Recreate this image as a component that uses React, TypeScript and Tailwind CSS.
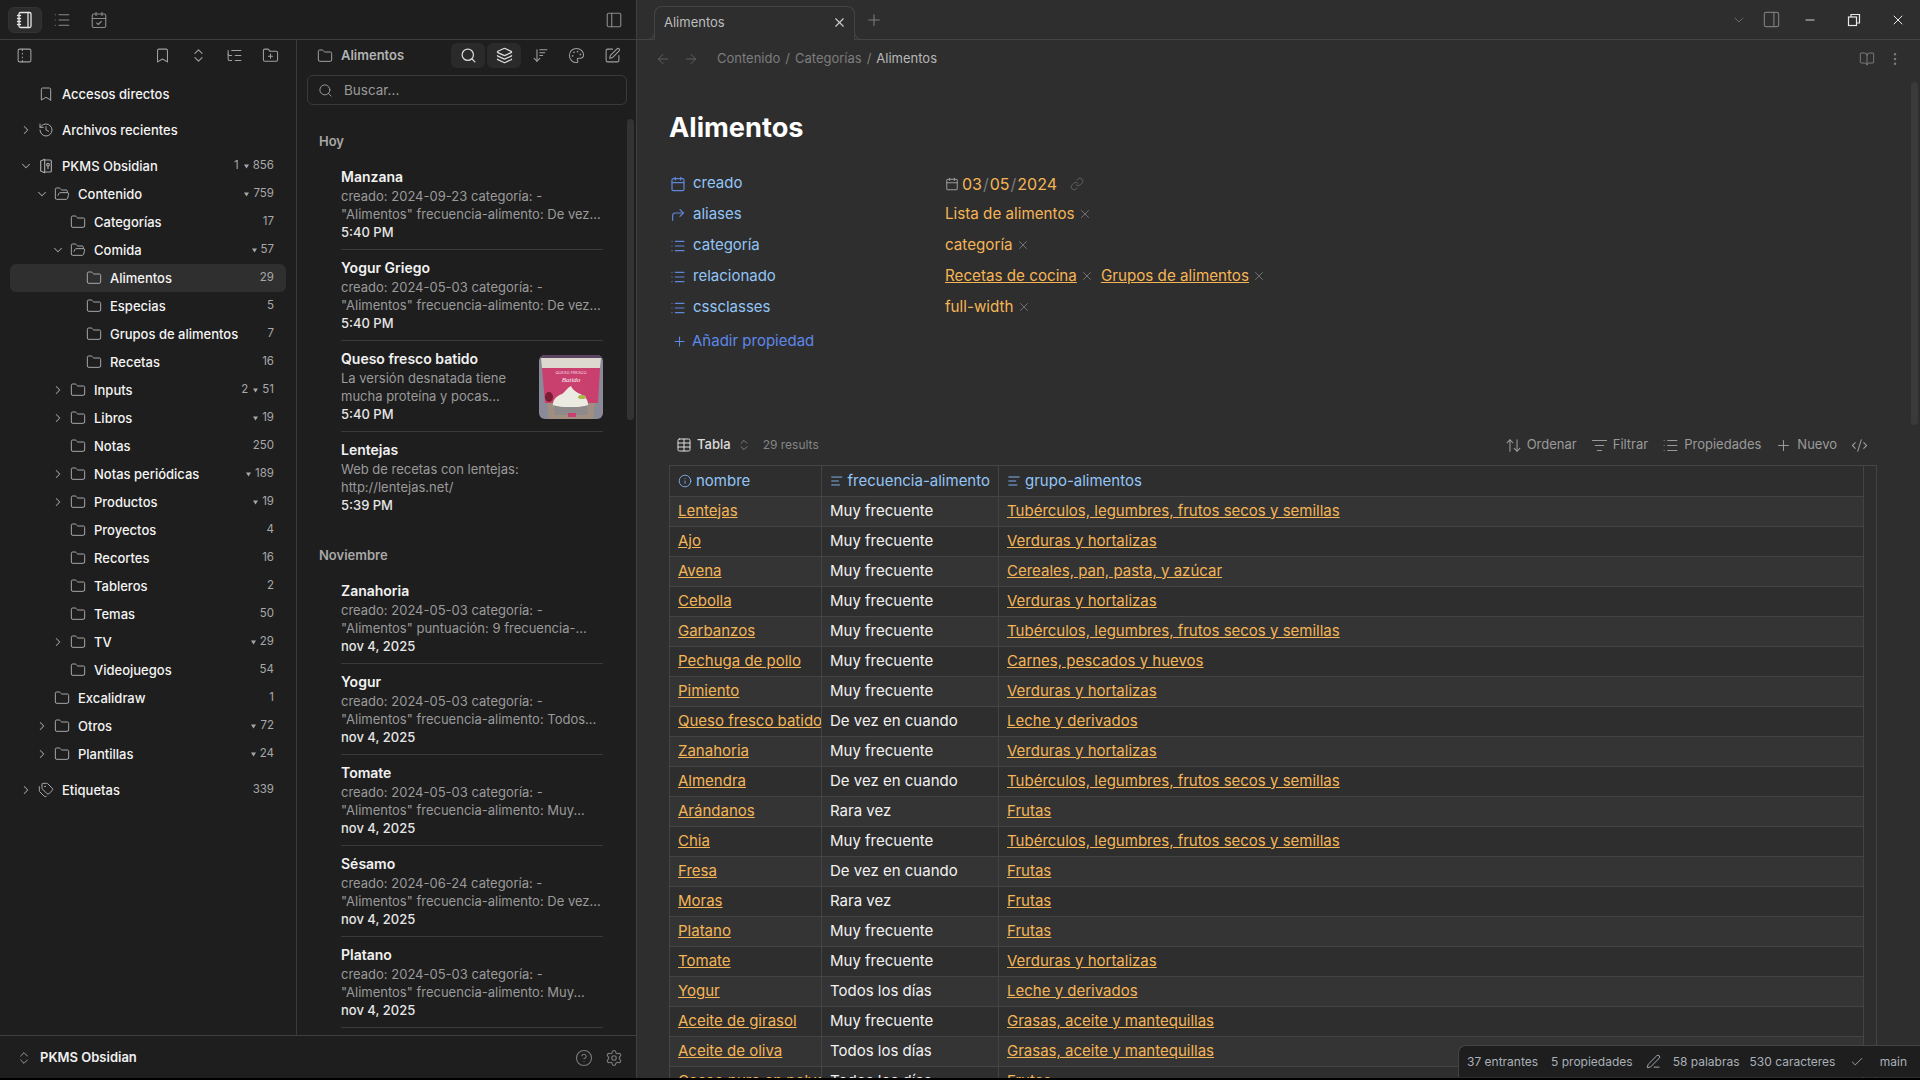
import React from "react";
import {
  Notebook, List, CalendarCheck, PanelLeft, PanelLeftDashed, Bookmark, ChevronsUpDown, ListTree, FolderPlus,
  Search, Layers, ArrowDownWideNarrow, Palette, SquarePen, ChevronRight, ChevronDown, History, Tags, Folder, FolderOpen,
  CircleHelp, Settings, X, Plus, PanelRight, Minus, BookOpen, EllipsisVertical, ArrowLeft, ArrowRight, Calendar,
  CornerUpRight, Link, Table, ArrowUpDown, ListFilter, CodeXml, Info, AlignLeft, PenLine, Check,
} from "lucide-react";

type Row = { label: string; level: number; icon?: "folder" | "open" | "bookmark" | "history" | "vault" | "tag"; chev?: "r" | "d"; pre?: string; tri?: boolean; count?: string; active?: boolean; gap?: boolean };

const rows: Row[] = [
  { label: "Accesos directos", level: 0, icon: "bookmark" },
  { label: "Archivos recientes", level: 0, icon: "history", chev: "r", gap: true },
  { label: "PKMS Obsidian", level: 0, icon: "vault", chev: "d", pre: "1", tri: true, count: "856", gap: true },
  { label: "Contenido", level: 1, icon: "open", chev: "d", tri: true, count: "759" },
  { label: "Categorías", level: 2, count: "17" },
  { label: "Comida", level: 2, icon: "open", chev: "d", tri: true, count: "57" },
  { label: "Alimentos", level: 3, count: "29", active: true },
  { label: "Especias", level: 3, count: "5" },
  { label: "Grupos de alimentos", level: 3, count: "7" },
  { label: "Recetas", level: 3, count: "16" },
  { label: "Inputs", level: 2, chev: "r", pre: "2", tri: true, count: "51" },
  { label: "Libros", level: 2, chev: "r", tri: true, count: "19" },
  { label: "Notas", level: 2, count: "250" },
  { label: "Notas periódicas", level: 2, chev: "r", tri: true, count: "189" },
  { label: "Productos", level: 2, chev: "r", tri: true, count: "19" },
  { label: "Proyectos", level: 2, count: "4" },
  { label: "Recortes", level: 2, count: "16" },
  { label: "Tableros", level: 2, count: "2" },
  { label: "Temas", level: 2, count: "50" },
  { label: "TV", level: 2, chev: "r", tri: true, count: "29" },
  { label: "Videojuegos", level: 2, count: "54" },
  { label: "Excalidraw", level: 1, count: "1" },
  { label: "Otros", level: 1, chev: "r", tri: true, count: "72" },
  { label: "Plantillas", level: 1, chev: "r", tri: true, count: "24" },
  { label: "Etiquetas", level: 0, icon: "tag", chev: "r", count: "339", gap: true },
];

const levelPad = ["pl-[8px]", "pl-[24px]", "pl-[40px]", "pl-[56px]"];

function VaultIcon() {
  return (
    <svg width="16" height="16" viewBox="0 0 24 24" fill="none" stroke="#a8a8a8" strokeWidth="1.75" strokeLinejoin="round" strokeLinecap="round">
      <path d="M4 4.5 10 2v20l-6-2.5z" />
      <path d="M10 3h8a2 2 0 0 1 2 2v14a2 2 0 0 1-2 2h-8" />
      <circle cx="15" cy="10" r="2" />
      <path d="M15 12v4" />
    </svg>
  );
}

function TreeIcon({ kind }: { kind?: Row["icon"] }) {
  const p = { size: 16, strokeWidth: 1.5, color: "#a8a8a8" };
  if (kind === "open") return <FolderOpen {...p} />;
  if (kind === "bookmark") return <Bookmark {...p} />;
  if (kind === "history") return <History {...p} />;
  if (kind === "tag") return <Tags {...p} />;
  if (kind === "vault") return <VaultIcon />;
  return <Folder {...p} />;
}

function Tri() {
  return (
    <svg width="5" height="5" viewBox="0 0 5 5" className="mr-[4px]">
      <polygon points="0,0.5 5,0.5 2.5,4.5" fill="#a8a8a8" />
    </svg>
  );
}

function TreeRow({ r }: { r: Row }) {
  return (
    <div className={`flex h-[28px] items-center rounded-md pr-[12px] ${levelPad[r.level]} ${r.active ? "bg-[#2f2f2f]" : ""} ${r.gap ? "mt-[8px]" : ""}`}>
      <span className="flex w-[16px] justify-center">
        {r.chev === "r" && <ChevronRight size={14} strokeWidth={1.75} color="#a0a0a0" />}
        {r.chev === "d" && <ChevronDown size={14} strokeWidth={1.75} color="#a0a0a0" />}
      </span>
      <span className="ml-[4px] flex w-[16px] justify-center"><TreeIcon kind={r.icon} /></span>
      <span className="ml-[8px] whitespace-nowrap text-[13px] leading-[18px] text-[#f4f4f4] [font-weight:450]">{r.label}</span>
      <span className="ml-auto flex items-center text-[11.5px] text-[#a8a8a8]">
        {r.pre && <span className="mr-[5px]">{r.pre}</span>}
        {r.tri && <Tri />}
        {r.count}
      </span>
    </div>
  );
}

type Note = { title: string; l1: string; l2: string; date: string; thumb?: boolean; noLine?: boolean };

const today: Note[] = [
  { title: "Manzana", l1: "creado: 2024-09-23 categoría: -", l2: "\"Alimentos\" frecuencia-alimento: De vez...", date: "5:40 PM" },
  { title: "Yogur Griego", l1: "creado: 2024-05-03 categoría: -", l2: "\"Alimentos\" frecuencia-alimento: De vez...", date: "5:40 PM" },
  { title: "Queso fresco batido", l1: "La versión desnatada tiene", l2: "mucha proteína y pocas...", date: "5:40 PM", thumb: true },
  { title: "Lentejas", l1: "Web de recetas con lentejas:", l2: "http://lentejas.net/", date: "5:39 PM", noLine: true },
];
const nov: Note[] = [
  { title: "Zanahoria", l1: "creado: 2024-05-03 categoría: -", l2: "\"Alimentos\" puntuación: 9 frecuencia-...", date: "nov 4, 2025" },
  { title: "Yogur", l1: "creado: 2024-05-03 categoría: -", l2: "\"Alimentos\" frecuencia-alimento: Todos...", date: "nov 4, 2025" },
  { title: "Tomate", l1: "creado: 2024-05-03 categoría: -", l2: "\"Alimentos\" frecuencia-alimento: Muy...", date: "nov 4, 2025" },
  { title: "Sésamo", l1: "creado: 2024-06-24 categoría: -", l2: "\"Alimentos\" frecuencia-alimento: De vez...", date: "nov 4, 2025" },
  { title: "Platano", l1: "creado: 2024-05-03 categoría: -", l2: "\"Alimentos\" frecuencia-alimento: Muy...", date: "nov 4, 2025" },
];

function Thumb() {
  return (
    <svg width="64" height="64" viewBox="0 0 64 64" className="shrink-0 rounded-md">
      <rect width="64" height="64" fill="#8a8a98" />
      <rect width="64" height="3" fill="#5a4460" />
      <path d="M2 3h60l-1 10H3z" fill="#ddd8d0" />
      <path d="M3 13h58l-2 35H6z" fill="#c9406f" />
      <path d="M8 48h48l-2 16H10z" fill="#a08f80" />
      <text x="32" y="19" fontSize="4" fill="#f5dfe6" textAnchor="middle" fontFamily="Inter, sans-serif">QUESO FRESCO</text>
      <text x="32" y="27" fontSize="7" fill="#fbeef3" textAnchor="middle" fontStyle="italic" fontFamily="Liberation Serif, serif">Batido</text>
      <path d="M14 52c-1-8 4-11 9-13 3-2 5-6 9-8 1 3 4 5 7 7 5 2 11 5 10 14z" fill="#ecebe2" />
      <path d="M14 50c8 3 27 3 35 0l-1 10H16z" fill="#8e8a8c" />
      <ellipse cx="43" cy="42" rx="4" ry="2" fill="#a9b64a" />
      <ellipse cx="10" cy="42" rx="4" ry="5" fill="#7a1c32" />
      <rect x="29" y="58" width="8" height="4" fill="#c9406f" />
    </svg>
  );
}

function NoteCard({ n }: { n: Note }) {
  return (
    <div className={`flex justify-between pb-[8px] pt-[9px] ${n.noLine ? "" : "border-b border-[#3a3a3a]"}`}>
      <div className="min-w-0">
        <div className="mb-[1px] h-[18px] text-[14px] font-semibold leading-[18px] text-[#f2f2f2]">{n.title}</div>
        <div className="h-[18px] whitespace-nowrap text-[13px] leading-[18px] text-[#9a9a9a]">{n.l1}</div>
        <div className="h-[18px] whitespace-nowrap text-[13px] leading-[18px] text-[#9a9a9a]">{n.l2}</div>
        <div className="h-[18px] whitespace-nowrap text-[13px] font-medium leading-[18px] text-[#e6e6e6]">{n.date}</div>
      </div>
      {n.thumb && <div className="mt-[5px]"><Thumb /></div>}
    </div>
  );
}

const MF = "Muy frecuente", DV = "De vez en cuando", RV = "Rara vez", TD = "Todos los días";
const TUB = "Tubérculos, legumbres, frutos secos y semillas", VER = "Verduras y hortalizas", FRU = "Frutas", GRA = "Grasas, aceite y mantequillas", LEC = "Leche y derivados";
const tableRows: [string, string, string][] = [
  ["Lentejas", MF, TUB], ["Ajo", MF, VER], ["Avena", MF, "Cereales, pan, pasta, y azúcar"], ["Cebolla", MF, VER],
  ["Garbanzos", MF, TUB], ["Pechuga de pollo", MF, "Carnes, pescados y huevos"], ["Pimiento", MF, VER],
  ["Queso fresco batido", DV, LEC], ["Zanahoria", MF, VER], ["Almendra", DV, TUB], ["Arándanos", RV, FRU], ["Chia", MF, TUB],
  ["Fresa", DV, FRU], ["Moras", RV, FRU], ["Platano", MF, FRU], ["Tomate", MF, VER], ["Yogur", TD, LEC],
  ["Aceite de girasol", MF, GRA], ["Aceite de oliva", TD, GRA], ["Cacao puro en polvo", TD, FRU],
];

const propIcon = { size: 16, strokeWidth: 1.75, color: "#5f86d8" };

function PropRow({ icon, label, children }: { icon: React.ReactNode; label: string; children: React.ReactNode }) {
  return (
    <div className="flex h-[31px] items-center">
      <div className="flex w-[276px] items-center">
        <span className="ml-[1px] flex w-[16px] justify-center">{icon}</span>
        <span className="ml-[7px] text-[15px] text-[#93c5f7]">{label}</span>
      </div>
      <div className="flex items-center text-[15.2px] text-[#f5b556]">{children}</div>
    </div>
  );
}

function Rm() {
  return <X size={14} strokeWidth={1.5} color="#7a7a7a" className="ml-[3px]" />;
}

function Tool({ icon, label }: { icon: React.ReactNode; label: string }) {
  return (
    <div className="flex items-center gap-[5px] text-[13px] text-[#9a9a9a]">
      {icon}
      {label}
    </div>
  );
}

export default function App() {
  const topIcon = { size: 18, strokeWidth: 1.5, color: "#8a8a8a" };
  const hdrIcon = { size: 17, strokeWidth: 1.5, color: "#a0a0a0" };
  const toolIcon = { size: 17, strokeWidth: 1.5, color: "#9a9a9a" };
  return (
    <div className="h-[1080px] w-[1920px] overflow-hidden bg-black [font-family:Inter,sans-serif]">
      <div className="flex h-[1078px]">
        {/* Sidebar */}
        <aside className="flex w-[637px] shrink-0 flex-col border-r border-[#3f3f3f] bg-[#1e1e1e]">
          <div className="flex h-[40px] shrink-0 items-center border-b border-[#3f3f3f] pl-[8px] pr-[13px]">
            <div className="flex h-[26px] w-[34px] items-center justify-center rounded-md border border-[#333] bg-[#2c2c2c]">
              <Notebook size={18} strokeWidth={1.75} color="#e6e6e6" />
            </div>
            <div className="ml-[11px] flex w-[18px] justify-center"><List {...topIcon} /></div>
            <div className="ml-[19px] flex w-[18px] justify-center"><CalendarCheck {...topIcon} /></div>
            <div className="ml-auto"><PanelLeft size={18} strokeWidth={1.5} color="#8a8a8a" /></div>
          </div>
          <div className="flex min-h-0 flex-1">
            {/* Explorer */}
            <div className="w-[297px] shrink-0 border-r border-[#3a3a3a]">
              <div className="flex h-[31px] items-center pl-[16px] pr-[17px]">
                <PanelLeftDashed {...hdrIcon} />
                <div className="ml-auto flex items-center gap-[19px]">
                  <Bookmark {...hdrIcon} />
                  <ChevronsUpDown {...hdrIcon} />
                  <ListTree {...hdrIcon} />
                  <FolderPlus {...hdrIcon} />
                </div>
              </div>
              <div className="pl-[10px] pr-[10px] pt-[9px]">
                {rows.map((r) => <TreeRow key={r.label} r={r} />)}
              </div>
            </div>
            {/* Notes */}
            <div className="min-w-0 flex-1 overflow-hidden">
              <div className="flex h-[31px] items-center pl-[20px] pr-[7px]">
                <Folder size={16} strokeWidth={1.5} color="#a0a0a0" />
                <span className="ml-[8px] text-[13px] font-semibold text-[#b4b4b4]">Alimentos</span>
                <div className="ml-auto flex items-center gap-[2px]">
                  <div className="flex h-[25px] w-[34px] items-center justify-center rounded-md bg-[#2a2a2a]"><Search size={17} strokeWidth={1.75} color="#dcdcdc" /></div>
                  <div className="flex h-[25px] w-[34px] items-center justify-center rounded-md bg-[#2a2a2a]"><Layers size={17} strokeWidth={1.75} color="#dcdcdc" /></div>
                  <div className="flex h-[25px] w-[34px] items-center justify-center"><ArrowDownWideNarrow {...hdrIcon} /></div>
                  <div className="flex h-[25px] w-[34px] items-center justify-center"><Palette {...hdrIcon} /></div>
                  <div className="flex h-[25px] w-[34px] items-center justify-center"><SquarePen {...hdrIcon} /></div>
                </div>
              </div>
              <div className="ml-[10px] mr-[9px] mt-[4px] flex h-[30px] items-center rounded-md border border-[#3a3a3a] pl-[10px]">
                <Search size={15} strokeWidth={1.5} color="#a0a0a0" />
                <span className="ml-[11px] text-[13.5px] text-[#9a9a9a]">Buscar...</span>
              </div>
              <div className="relative pl-[22px] pr-[33px] pt-[27px]">
                <div className="absolute right-[2px] top-[14px] h-[301px] w-[7px] rounded-full bg-[#333]" />
                <div className="mb-[9px] h-[18px] text-[13px] font-semibold leading-[18px] text-[#a8a8a8]">Hoy</div>
                <div className="pl-[22px]">{today.map((n) => <NoteCard key={n.title} n={n} />)}</div>
                <div className="mb-[9px] mt-[24px] h-[18px] text-[13px] font-semibold leading-[18px] text-[#a8a8a8]">Noviembre</div>
                <div className="pl-[22px]">{nov.map((n) => <NoteCard key={n.title} n={n} />)}</div>
              </div>
            </div>
          </div>
          <div className="flex h-[43px] shrink-0 items-center border-t border-[#3f3f3f] pl-[16px] pr-[13px] pt-[2px]">
            <ChevronsUpDown size={16} strokeWidth={1.5} color="#9a9a9a" />
            <span className="ml-[8px] text-[13px] font-semibold text-[#f0f0f0]">PKMS Obsidian</span>
            <div className="ml-auto flex items-center gap-[12px]">
              <CircleHelp size={18} strokeWidth={1.5} color="#7a7a7a" />
              <Settings size={18} strokeWidth={1.5} color="#7a7a7a" />
            </div>
          </div>
        </aside>

        {/* Main */}
        <main className="relative min-w-0 flex-1 overflow-hidden bg-[#2e2e2e]">
          <div className="flex h-[40px] items-end border-b border-[#444] pl-[17px] pr-[14px]">
            <div className="relative -mb-px flex h-[34px] w-[201px] items-center rounded-t-lg border border-b-0 border-[#444] bg-[#2e2e2e] pb-[2px] pl-[9px] pr-[7px]">
              <div className="absolute bottom-0 left-[-8px] h-[8px] w-[8px] rounded-br-lg border-b border-r border-[#444] bg-[#2e2e2e]" />
              <div className="absolute bottom-0 right-[-8px] h-[8px] w-[8px] rounded-bl-lg border-b border-l border-[#444] bg-[#2e2e2e]" />
              <span className="text-[13px] text-[#bdbdbd]">Alimentos</span>
              <X size={15} strokeWidth={1.75} color="#d0d0d0" className="ml-auto" />
            </div>
            <div className="mb-[10px] ml-[10px]"><Plus size={18} strokeWidth={1.5} color="#7a7a7a" /></div>
            <div className="mb-[10px] ml-auto flex items-center">
              <ChevronDown size={16} strokeWidth={1.5} color="#6a6a6a" />
              <PanelRight size={19} strokeWidth={1.5} color="#7a7a7a" className="ml-[15px]" />
              <Minus size={14} strokeWidth={1.5} color="#e8e8e8" className="ml-[22px]" />
              <svg width="14" height="14" viewBox="0 0 14 14" fill="none" stroke="#e8e8e8" strokeWidth="1.2" className="ml-[30px]">
                <rect x="1.5" y="4" width="8" height="8.5" />
                <path d="M4 4V1.5h8.5V10H9.5" />
              </svg>
              <X size={16} strokeWidth={1.5} color="#e8e8e8" className="ml-[29px]" />
            </div>
          </div>
          <div className="flex h-[38px] items-center pl-[18px] pr-[17px]">
            <ArrowLeft size={16} strokeWidth={1.5} color="#5e5e5e" />
            <ArrowRight size={16} strokeWidth={1.5} color="#5e5e5e" className="ml-[12px]" />
            <div className="ml-[18px] flex items-center gap-[5px] text-[13px] text-[#7d7d7d]">
              <span>Contenido</span><span>/</span><span>Categorías</span><span>/</span><span className="text-[#b8b8b8]">Alimentos</span>
            </div>
            <BookOpen size={16} strokeWidth={1.5} color="#7a7a7a" className="ml-auto" />
            <EllipsisVertical size={16} strokeWidth={1.75} color="#7a7a7a" className="ml-[12px]" />
          </div>
          <div className="absolute right-[2px] top-[82px] h-[343px] w-[7px] rounded-full bg-[#3a3a3a]" />
          <div className="pl-[32px] pr-[43px]">
            <h1 className="mt-[33px] h-[34px] text-[27.2px] font-bold leading-[34px] text-white">Alimentos</h1>
            <div className="mt-[23px]">
              <PropRow icon={<Calendar {...propIcon} />} label="creado">
                <Calendar size={14} strokeWidth={1.75} color="#9a9a9a" className="mr-[3px]" />
                <span className="text-[16px]">03<span className="mx-[1px] text-[#7a7a7a]">/</span>05<span className="mx-[1px] text-[#7a7a7a]">/</span>2024</span>
                <Link size={14} strokeWidth={1.5} color="#666" className="ml-[13px]" />
              </PropRow>
              <PropRow icon={<CornerUpRight {...propIcon} />} label="aliases">Lista de alimentos<Rm /></PropRow>
              <PropRow icon={<List {...propIcon} />} label="categoría">categoría<Rm /></PropRow>
              <PropRow icon={<List {...propIcon} />} label="relacionado">
                <span className="underline">Recetas de cocina</span><Rm />
                <span className="ml-[7px] underline">Grupos de alimentos</span><Rm />
              </PropRow>
              <PropRow icon={<List {...propIcon} />} label="cssclasses">full-width<Rm /></PropRow>
              <div className="flex h-[36px] items-center text-[15px] text-[#5e87ea]">
                <Plus size={15} strokeWidth={1.75} className="ml-[3px] mr-[5px]" />Añadir propiedad
              </div>
            </div>
            <div className="mt-[70px] flex h-[32px] items-center">
              <Table size={16} strokeWidth={1.5} color="#dcdcdc" className="ml-[7px]" />
              <span className="ml-[5px] text-[13px] font-medium text-[#dcdcdc]">Tabla</span>
              <ChevronsUpDown size={14} strokeWidth={1.5} color="#8a8a8a" className="ml-[6px]" />
              <span className="ml-[12px] text-[12px] text-[#858585]">29 results</span>
              <div className="ml-auto mr-[9px] flex items-center gap-[14px]">
                <Tool icon={<ArrowUpDown {...toolIcon} />} label="Ordenar" />
                <Tool icon={<ListFilter {...toolIcon} />} label="Filtrar" />
                <Tool icon={<List {...toolIcon} />} label="Propiedades" />
                <Tool icon={<Plus {...toolIcon} />} label="Nuevo" />
                <CodeXml {...toolIcon} />
              </div>
            </div>
            <div className="mt-[4px] border-r border-t border-[#444] pr-[12px]">
              <table className="w-[1195px] table-fixed border-collapse">
                <colgroup>
                  <col className="w-[152px]" />
                  <col className="w-[177px]" />
                  <col />
                </colgroup>
                <thead>
                  <tr className="h-[30px]">
                    <th className="border-x border-b border-[#444] px-[8px] text-left font-normal">
                      <div className="flex items-center text-[15px] text-[#93c5f7]"><Info size={14} strokeWidth={1.5} color="#7fb0ee" className="mr-[4px]" />nombre</div>
                    </th>
                    <th className="border-x border-b border-[#444] px-[8px] text-left font-normal">
                      <div className="flex items-center whitespace-nowrap text-[15px] text-[#93c5f7]"><AlignLeft size={14} strokeWidth={1.75} color="#7fb0ee" className="mr-[4px]" />frecuencia-alimento</div>
                    </th>
                    <th className="border-x border-b border-[#444] px-[8px] text-left font-normal">
                      <div className="flex items-center text-[15px] text-[#93c5f7]"><AlignLeft size={14} strokeWidth={1.75} color="#7fb0ee" className="mr-[4px]" />grupo-alimentos</div>
                    </th>
                  </tr>
                </thead>
                <tbody>
                  {tableRows.map((t, i) => (
                    <tr key={t[0]} className={`h-[30px] ${i % 2 === 0 ? "bg-[#343434]" : ""}`}>
                      <td className="overflow-hidden whitespace-nowrap border border-[#444] pl-[8px] text-[15px] text-[#f5b556] underline">{t[0]}</td>
                      <td className="overflow-hidden whitespace-nowrap border border-[#444] pl-[8px] text-[15px] text-[#f2f2f2]">{t[1]}</td>
                      <td className="whitespace-nowrap border border-[#444] pl-[8px] text-[15px] text-[#f5b556] underline">{t[2]}</td>
                    </tr>
                  ))}
                </tbody>
              </table>
            </div>
          </div>
          <div className="absolute bottom-[1px] right-0 flex h-[32px] w-[462px] items-center rounded-tl-lg border-l border-t border-[#444] bg-[#1e1e1e] pl-[8px] text-[12px] text-[#a9b0b8]">
            <span>37 entrantes</span>
            <span className="ml-[13px]">5 propiedades</span>
            <PenLine size={15} strokeWidth={1.5} color="#a9b0b8" className="ml-[13px]" />
            <span className="ml-[12px]">58 palabras</span>
            <span className="ml-[10px]">530 caracteres</span>
            <Check size={14} strokeWidth={1.5} color="#a9b0b8" className="ml-[15px]" />
            <span className="ml-auto mr-[13px]">main</span>
          </div>
        </main>
      </div>
    </div>
  );
}
